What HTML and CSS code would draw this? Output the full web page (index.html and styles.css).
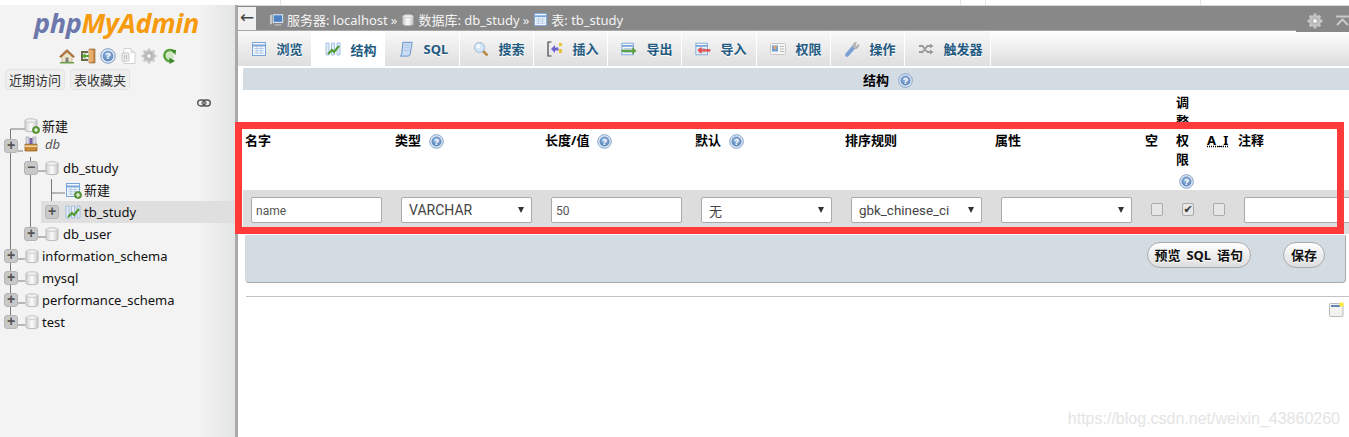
FILE: index.html
```html
<!DOCTYPE html>
<html lang="zh">
<head>
<meta charset="utf-8">
<title>phpMyAdmin</title>
<link rel="stylesheet" href="styles.css">
</head>
<body>
<svg class="defs" width="0" height="0">
  <defs>
    <radialGradient id="hg" cx="50%" cy="40%" r="60%"><stop offset="0" stop-color="#a9c3e6"/><stop offset="1" stop-color="#4f7fb8"/></radialGradient>
    <linearGradient id="dbg" x1="0" x2="1" y1="0" y2="0"><stop offset="0" stop-color="#d0d0d0"/><stop offset=".5" stop-color="#fbfbfb"/><stop offset="1" stop-color="#c8c8c8"/></linearGradient>
    <symbol id="i-help" viewBox="0 0 16 16"><circle cx="8" cy="8" r="7.3" fill="#dfe8f4" stroke="#7f9fc8"/><circle cx="8" cy="8" r="5.3" fill="url(#hg)"/><text x="8" y="11.4" font-size="9.5" font-weight="700" text-anchor="middle" fill="#fff" font-family="Liberation Sans">?</text></symbol>
    <symbol id="i-db" viewBox="0 0 14 16"><path d="M1 3.500C1 1.600 13 1.600 13 3.500V13C13 15.200 1 15.200 1 13Z" fill="url(#dbg)" stroke="#b9b9b9"/><ellipse cx="7" cy="3.600" rx="5.700" ry="1.800" fill="#efefef" stroke="#c0c0c0" stroke-width=".7"/></symbol>
    <symbol id="i-plus" viewBox="0 0 8 8"><circle cx="4" cy="4" r="3.6" fill="#5c9a3a" stroke="#3f7a24" stroke-width=".6"/><path d="M4 2v4M2 4h4" stroke="#fff" stroke-width="1.2"/></symbol>
    <symbol id="i-table" viewBox="0 0 16 16"><rect x="1.5" y="1.5" width="13" height="13" fill="#f4f8fd" stroke="#7aa5d8"/><path d="M1.5 4.5h13" stroke="#7aa5d8" stroke-width="2"/><path d="M3 7.5h10M3 9.7h10M3 12h10M6 6v7M10 6v7" stroke="#a9c4e4" stroke-width=".8"/></symbol>
    <symbol id="i-struct" viewBox="0 0 16 16"><path d="M1 2h3v12H1zM6.5 2h3v12h-3zM12 2h3v12h-3z" fill="#e4edf8" stroke="#90b2dc" stroke-width=".8"/><path d="M3 13 7 9l2 2 5-6" fill="none" stroke="#4d9a2e" stroke-width="2"/></symbol>
    <symbol id="i-scroll" viewBox="0 0 16 18"><path d="M4.5 1.5H15L12.5 15.5Q12 17 10 17H1.5Q3 16.5 3.2 14Z" fill="#c9dcf3" stroke="#5d8cc5"/><path d="M6 4.5h6M5.6 7.5h6M5.2 10.5h6" stroke="#9fbde2" stroke-width=".8"/></symbol>
    <symbol id="i-search" viewBox="0 0 16 16"><path d="m9.5 9.5 5 5" stroke="#b98a4a" stroke-width="2.6"/><circle cx="6.5" cy="6.5" r="5" fill="#d4e6f8" stroke="#9db7d3"/><circle cx="5.3" cy="5.3" r="2" fill="#fff" opacity=".8"/></symbol>
    <symbol id="i-insert" viewBox="0 0 16 16"><path d="M4.500 1H1v14h3.500" fill="none" stroke="#444" stroke-width="1.200"/><path d="M4 8l4-4v2.500h3.500v3H8V12Z" fill="#6f63c9"/><rect x="12" y="2" width="3" height="3" fill="#e8c33a"/><rect x="12" y="8" width="3" height="4" fill="#e8c33a"/></symbol>
    <symbol id="i-export" viewBox="0 0 18 16"><rect x="1" y="1.500" width="13" height="13" fill="#f4f8fd" stroke="#7aa5d8"/><path d="M1 4.500h13" stroke="#7aa5d8" stroke-width="2"/><path d="M3 7.500h9M3 12h9" stroke="#a9c4e4"/><path d="M1 9h12V6.500l4 3.500-4 3.500V11H1Z" fill="#5aa636" stroke="#3e7d22" stroke-width=".5"/></symbol>
    <symbol id="i-import" viewBox="0 0 18 16"><rect x="1" y="1.500" width="13" height="13" fill="#f4f8fd" stroke="#7aa5d8"/><path d="M1 4.500h13" stroke="#7aa5d8" stroke-width="2"/><path d="M3 7.500h9M3 12h9" stroke="#a9c4e4"/><path d="M17 8.500H7V6L3 9.500 7 13v-2.500h10Z" fill="#ef4f4f" stroke="#c93030" stroke-width=".5"/></symbol>
    <symbol id="i-card" viewBox="0 0 16 14"><rect x=".5" y="1.500" width="15" height="11" rx="1" fill="#f5f5f5" stroke="#c8c8c8"/><rect x="2" y="3.500" width="6" height="6" fill="#6f9ed6"/><circle cx="5" cy="5.500" r="1.700" fill="#e8a468"/><path d="M10 4.500h4M10 7h4M10 9.500h4" stroke="#bbb"/></symbol>
    <symbol id="i-wrench" viewBox="0 0 16 18"><path d="m2.500 15.500 7-8" stroke="#7ba0d4" stroke-width="4.500" stroke-linecap="round"/><path d="M9 6.500A4 4 0 0 1 13 1.500l-1.500 3 2 1.500 2-2.500A4 4 0 0 1 10.500 8.500" fill="#b9b9b9" stroke="#909090" stroke-width=".5"/></symbol>
    <symbol id="i-trig" viewBox="0 0 16 12"><path d="M1 3h3.500l5 6H12M1 9h3.500l5-6H12" fill="none" stroke="#9a9a9a" stroke-width="1.800"/><path d="m12 .5 3.500 2.500L12 5.500ZM12 6.500l3.500 2.500L12 11.500Z" fill="#9a9a9a"/></symbol>
    <symbol id="i-gear" viewBox="0 0 16 16"><circle cx="8" cy="8" r="6" fill="#c9c9c9"/><g stroke="#c9c9c9" stroke-width="2.600"><path d="M8 .5v15M.5 8h15M2.700 2.700l10.600 10.600M13.300 2.700 2.700 13.300"/></g><circle cx="8" cy="8" r="5" fill="#bdbdbd"/><circle cx="8" cy="8" r="2.600" fill="#efefef" stroke="#8e8e8e" stroke-width=".6"/></symbol>
  </defs>
</svg>

<div class="strip"><span class="tick t1"></span><span class="tick t2"></span><span class="tick t3"></span><span class="tick t4"></span></div>

<div class="app">
  <aside class="side">
    <div class="logo"><span class="php">php</span><span class="my">MyAdmin</span></div>
    <div class="quick">
      <svg class="qi" viewBox="0 0 16 16"><path d="M.5 8.500 8 1.500l7.500 7-1.500 1L8 4 2 9.500Z" fill="#b5773a" stroke="#7d4e20" stroke-width=".5"/><path d="M3 9l5-4.500L13 9v5H3Z" fill="#efe5c9" stroke="#a99a74" stroke-width=".5"/><rect x="6.500" y="9.500" width="3" height="4.500" fill="#7f7f7f"/><path d="M1 14h14v1.500H1Z" fill="#69a14a"/></svg>
      <svg class="qi" viewBox="0 0 16 16"><path d="M9 1h6v14H9Z" fill="#c98f4e" stroke="#8a5c28" stroke-width=".6"/><path d="M9 1 13 3v10l-4 2Z" fill="#e7b06a"/><path d="M1 3h7v2H3v6h5v2H1Z" fill="#6b6b4e"/><path d="M2 8l3.500-3v2H9v2H5.500v2Z" fill="#5aa636"/></svg>
      <svg class="qi" viewBox="0 0 16 16"><use href="#i-help"/></svg>
      <svg class="qi" viewBox="0 0 16 16"><path d="M3 .5h7l4 4v11H3Z" fill="#fff" stroke="#d2d2d2"/><path d="M10 .5v4h4" fill="#eee" stroke="#d2d2d2"/><rect x="1" y="5" width="7" height="8" rx="1" fill="#ececec" stroke="#c6c6c6"/><path d="M3.500 7v4M5.500 7v4" stroke="#bbb"/></svg>
      <svg class="qi" viewBox="0 0 16 16"><use href="#i-gear"/></svg>
      <svg class="qi" viewBox="0 0 16 16"><circle cx="8" cy="8" r="4" fill="#cfe6c2"/><path d="M12.500 4.500A5.500 5.500 0 1 0 8.500 13" fill="none" stroke="#58a23c" stroke-width="2.600"/><path d="M7.500 9.500l5.500 3.500-5.500 3ZM9 1.500l5 .5-.5 5Z" fill="#3f8a2a"/></svg>
    </div>
    <div class="side-tabs"><button class="side-btn">近期访问</button><button class="side-btn">表收藏夹</button></div>
    <div class="link-row"><svg class="link-i" viewBox="0 0 14 8"><rect x=".7" y="1" width="7.500" height="6" rx="3" fill="none" stroke="#555" stroke-width="1.400"/><rect x="5.800" y="1" width="7.500" height="6" rx="3" fill="none" stroke="#555" stroke-width="1.400"/><path d="M4 4h6" stroke="#888" stroke-width="1.400"/></svg></div>

    <div class="tree">
      <svg class="wires" width="236" height="222" viewBox="0 0 236 222"><path d="M10.500 22V216M10.500 22H25M18 152H25M18 174H25M18 196H25M18 218H25M30.500 50V130M38 64H46M38 130H46M51.500 72V108M51.500 86H65M59 108H65M18 44H23" fill="none" stroke="#7a7a7a"/></svg>
      <div class="row r-new"><svg class="dbi"><use href="#i-db"/></svg><svg class="badge"><use href="#i-plus"/></svg><span class="nm">新建</span></div>
      <div class="row r-db"><span class="exp">+</span><svg class="box" viewBox="0 0 16 16"><path d="M2 8h12v7H2Z" fill="#c98a3a" stroke="#8a5c22" stroke-width=".7"/><rect x="2" y="9.500" width="12" height="1.500" fill="#f0d8a0"/><rect x="3" y="1" width="3" height="7" fill="#d8d8e8" stroke="#777" stroke-width=".4"/><rect x="6.500" y="2" width="3" height="6" fill="#7a5fa8"/><rect x="10" y="1" width="3" height="7" fill="#d8d8e8" stroke="#777" stroke-width=".4"/></svg><span class="nm ital">db</span></div>
      <div class="row r-l1"><span class="exp">−</span><svg class="dbi gap7"><use href="#i-db"/></svg><span class="nm t-l1">db_study</span></div>
      <div class="row r-l2new"><svg class="ti"><use href="#i-table"/></svg><svg class="badge b2"><use href="#i-plus"/></svg><span class="nm">新建</span></div>
      <div class="row r-cur"><span class="exp">+</span><svg class="ti gap6"><use href="#i-struct"/></svg><span class="nm t-cur">tb_study</span></div>
      <div class="row r-l1"><span class="exp">+</span><svg class="dbi gap7"><use href="#i-db"/></svg><span class="nm t-l1">db_user</span></div>
      <div class="row r-l0"><span class="exp">+</span><svg class="dbi gap7"><use href="#i-db"/></svg><span class="nm t-l0">information_schema</span></div>
      <div class="row r-l0"><span class="exp">+</span><svg class="dbi gap7"><use href="#i-db"/></svg><span class="nm t-l0">mysql</span></div>
      <div class="row r-l0"><span class="exp">+</span><svg class="dbi gap7"><use href="#i-db"/></svg><span class="nm t-l0">performance_schema</span></div>
      <div class="row r-l0"><span class="exp">+</span><svg class="dbi gap7"><use href="#i-db"/></svg><span class="nm t-l0">test</span></div>
    </div>
  </aside>
  <div class="divider"></div>

  <main class="main">
    <div class="topbar">
      <div class="back">←</div>
      <div class="crumbs">
        <svg class="ci" viewBox="0 0 16 16"><rect x="1" y="3" width="3" height="10" fill="#c9c9c9"/><rect x="3.500" y="2" width="12" height="10" fill="#dbe6f3" stroke="#777" stroke-width=".6"/><rect x="5" y="3.500" width="9" height="7" fill="#4f82c4"/><rect x="6" y="13" width="7" height="1.500" fill="#bbb"/></svg><span class="cr">服务器: localhost</span><span class="sep">»</span>
        <svg class="ci2" viewBox="0 0 14 16"><use href="#i-db"/></svg><span class="cr">数据库: db_study</span><span class="sep">»</span>
        <svg class="ci ci3" viewBox="0 0 16 16"><use href="#i-table"/></svg><span class="cr">表: tb_study</span>
      </div>
    </div>
    <div class="top-tools">
      <svg class="tool-gear"><use href="#i-gear"/></svg>
      <svg class="tool-up" viewBox="0 0 13 12"><path d="M0 1.500h13" stroke="#c9c9c9" stroke-width="2"/><path d="m1 10 5.500-5.500L12 10" fill="none" stroke="#c9c9c9" stroke-width="2"/></svg>
    </div>

    <nav class="tabs">
      <a class="tab"><svg class="tab-i"><use href="#i-table"/></svg>浏览</a>
      <a class="tab t-b active"><svg class="tab-i"><use href="#i-struct"/></svg>结构</a>
      <a class="tab t-c"><svg class="tab-i"><use href="#i-scroll"/></svg>SQL</a>
      <a class="tab"><svg class="tab-i"><use href="#i-search"/></svg>搜索</a>
      <a class="tab"><svg class="tab-i"><use href="#i-insert"/></svg>插入</a>
      <a class="tab"><svg class="tab-i"><use href="#i-export"/></svg>导出</a>
      <a class="tab t-d"><svg class="tab-i"><use href="#i-import"/></svg>导入</a>
      <a class="tab"><svg class="tab-i"><use href="#i-card"/></svg>权限</a>
      <a class="tab"><svg class="tab-i"><use href="#i-wrench"/></svg>操作</a>
      <a class="tab t-e"><svg class="tab-i"><use href="#i-trig"/></svg>触发器</a>
    </nav>

    <div class="content">
      <div class="heading"><b>结构</b><svg class="help h-head"><use href="#i-help"/></svg></div>

      <div class="grid g-head">
        <div class="th">名字</div>
        <div class="th">类型<svg class="help"><use href="#i-help"/></svg></div>
        <div class="th">长度/值<svg class="help"><use href="#i-help"/></svg></div>
        <div class="th">默认<svg class="help"><use href="#i-help"/></svg></div>
        <div class="th">排序规则</div>
        <div class="th">属性</div>
        <div class="th th-c">空</div>
        <div class="th th-v"><span>调整权限</span><svg class="help"><use href="#i-help"/></svg></div>
        <div class="th th-c"><abbr class="ai">A_I</abbr></div>
        <div class="th">注释</div>
      </div>

      <div class="grid g-row">
        <div class="td"><input class="fld" value="name" readonly></div>
        <div class="td"><div class="sel">VARCHAR</div></div>
        <div class="td"><input class="fld" value="50" readonly></div>
        <div class="td"><div class="sel sel-cjk">无</div></div>
        <div class="td"><div class="sel sel-sm">gbk_chinese_ci</div></div>
        <div class="td"><div class="sel"></div></div>
        <div class="td td-c"><span class="cb"></span></div>
        <div class="td td-c"><span class="cb on">✔</span></div>
        <div class="td td-c"><span class="cb"></span></div>
        <div class="td"><input class="fld wide" readonly></div>
      </div>

      <div class="panel">
        <button class="btn">预览 SQL 语句</button>
        <button class="btn">保存</button>
      </div>
      <hr class="rule">
      <div class="console-row">
        <svg class="console" viewBox="0 0 15 15"><rect x=".5" y="1.500" width="13.500" height="13" rx="1" fill="#f2f2ee" stroke="#bbb"/><path d="M2 4h9" stroke="#2f5f9f" stroke-width="1.500"/><circle cx="12.500" cy="2.500" r="2.300" fill="#ffe93b"/></svg>
      </div>
    </div>
  </main>
</div>

<div class="redbox"></div>
<div class="watermark">https://blog.csdn.net/weixin_43860260</div>
</body>
</html>
```
FILE: styles.css
```css
* { box-sizing: border-box; }
html, body { margin: 0; height: 437px; overflow: hidden; background: #fff; }
body { font: 13px "Noto Sans", "Noto Sans CJK SC", sans-serif; color: #000; position: relative; }
.defs { position: absolute; }
svg { display: block; flex: none; }

.strip { height: 5px; display: flex; }
.tick { width: 1px; background: #e4e4e4; }
.t1 { margin-left: 280px; }
.t2 { margin-left: 679px; }
.t3 { margin-left: 24px; }
.t4 { margin-left: 214px; }

.app { display: flex; height: 432px; }
.side { width: 235px; flex: none; position: relative; background: linear-gradient(90deg, #f3f3f3 0, #f3f3f3 85%, #e3e4e4 100%); }
.divider { width: 3px; flex: none; background: #a9a9a9; }
.main { flex: 1; min-width: 0; border-top: 1px solid #d8d8d8; position: relative; overflow: hidden; }

.logo { font: italic 700 27px/30px "Open Sans", sans-serif; letter-spacing: -.3px; padding: 3px 0 0 34px; height: 43px; white-space: nowrap; }
.php { color: #6c78ac; }
.my { color: #f79a0d; }
.quick { display: flex; height: 17px; padding-left: 59px; align-items: center; margin-top: -1px; margin-bottom: 1px; }
.qi { width: 16px; height: 16px; margin-right: 4.500px; }
.side-tabs { display: flex; gap: 5px; padding: 4px 0 0 5px; }
.side-btn { height: 21px; padding: 0 3px; width: 60px; font: 13px/19px "Noto Sans CJK SC", sans-serif; color: #333; background: #eee; border: 1px solid #e3e3e3; border-radius: 4px; white-space: nowrap; }
.link-row { display: flex; justify-content: flex-end; padding: 9px 24px 0 0; height: 21px; }
.link-i { width: 14px; height: 8px; }

.tree { position: relative; padding-top: 4px; }
.wires { position: absolute; left: 0; top: -4px; }
.row { display: flex; align-items: center; height: 22px; position: relative; }
.nm { color: #111; white-space: nowrap; font-size: 13px; }
.exp { width: 14px; height: 14px; flex: none; border-radius: 3px; background: #c9c9c9; border: 1px solid #b5b5b5; color: #555; font: 700 14px/11px "Liberation Sans", sans-serif; text-align: center; }
.dbi { width: 14px; height: 16px; }
.ti { width: 16px; height: 16px; }
.badge { width: 8px; height: 8px; margin: 10px 0 0 -6px; }
.gap7 { margin-left: 7px; }
.gap6 { margin-left: 6px; }
.r-new { height: 20px; padding-left: 24px; }
.r-new .nm { margin-left: 2px; }
.r-db { height: 22px; padding-left: 4px; }
.box { width: 16px; height: 16px; margin-left: 5px; margin-top: -5px; }
.ital { font-style: italic; color: #555; margin: -4px 0 0 6px; }
.r-l1 { padding-left: 24px; }
.t-l1 { margin-left: 4px; }
.r-l2new { padding-left: 65px; }
.r-l2new .nm { margin: -2px 0 0 2px; }
.b2 { margin-left: -7px; }
.r-cur { margin-left: 41px; padding-left: 4px; background: #dfdfdf; }
.t-cur { margin-left: 3px; }
.r-l0 { padding-left: 4px; }
.t-l0 { margin-left: 3px; }

.topbar { height: 24px; background: #888; display: flex; align-items: center; }
.back { width: 18px; height: 23px; margin-top: 1px; background: #f0f0f0; color: #444; font: 17px/20px "DejaVu Sans", sans-serif; text-align: center; }
.crumbs { display: flex; align-items: center; padding-left: 13px; color: #fff; font-size: 13px; margin-top: 3px; }
.ci { width: 15px; height: 15px; margin-right: 3px; }
.ci2 { width: 12px; height: 14px; margin-right: 4px; margin-left: 5px; }
.ci3 { margin-left: 4px; margin-right: 3px; }
.cr { white-space: nowrap; color: #f4f4f4; }
.sep { margin-left: 3px; font-size: 13px; color: #eee; }
.top-tools { position: absolute; right: 0; top: 0; width: 53px; height: 26px; background: #888; display: flex; align-items: center; padding: 3px 0 0 12px; }
.tool-gear { width: 16px; height: 16px; margin-left: -1px; }
.tool-up { width: 13px; height: 12px; margin-left: 13px; }

.tabs { display: flex; height: 37px; border-top: 1px solid #a8a8a8; background: linear-gradient(#fff, #dcdcdc); border-bottom: 1px solid #fff; }
.tab { display: flex; align-items: center; height: 35px; padding-left: 13px; width: 74px; flex: none; font-weight: 700; font-size: 13px; color: #235a81; text-shadow: 0 1px 0 #fff; border-right: 1px solid #fff; background: linear-gradient(#f9f9f9, #dedede); white-space: nowrap; }
.tab-i { width: 16px; height: 16px; margin-right: 9.500px; }
.t-d { width: 75px; }
.t-e { width: 86px; }
.t-b { width: 73px; }
.active { background: #fff; height: 36px; }
.t-c { width: 75px; }

.heading { margin: 1px 0 0 5px; height: 22px; background: #d3dce3; display: flex; align-items: center; padding-left: 620px; font-size: 13px; }
.help { width: 15px; height: 15px; margin-left: 8px; display: inline-block; vertical-align: -4px; }
.h-head { margin: 2px 0 0 9px; }

.grid { display: grid; grid-template-columns: repeat(6, 150px) 31px 31px 31px 200px; margin-left: 5px; }
.g-head { height: 99px; margin-top: 1px; padding-left: 2px; width: 1200px; }
.th { font-weight: 700; font-size: 13px; line-height: 19px; align-self: center; white-space: nowrap; }
.th-c { text-align: left; }
.th-v { white-space: normal; width: 15px; line-height: 19px; }
.th-v span { display: block; width: 14px; margin-top: 0; }
.th-v .help { margin: 5px 0 0 3px; display: block; }
.ai { text-decoration: underline dotted; letter-spacing: 1px; }

.g-row { background: #ddd; height: 44px; padding: 7px 0 0 2px; width: 1200px; }
.td { padding-left: 6px; }
.td-c { padding-top: 6px; }
.fld { width: 131px; height: 26px; border: 1px solid #aaa; border-radius: 2px; background: #fff; padding: 1px 4px 0; font: 12px "Roboto", sans-serif; color: #555; outline: 0; display: block; }
.wide { width: 196px; }
.sel { position: relative; width: 131px; height: 26px; border: 1px solid #aaa; border-radius: 2px; background: #fff; padding-left: 7px; font: 14px/25px "Roboto", sans-serif; color: #444; }
.sel::after { content: ""; position: absolute; right: 7px; top: 9px; border: 3.500px solid transparent; border-top: 6px solid #333; border-bottom: 0; }
.sel-cjk { font: 13px/26px "Noto Sans CJK SC", sans-serif; }
.sel-sm { font-size: 13.400px; }
.cb { display: block; width: 12px; height: 13px; border: 1px solid #aaa; border-radius: 2px; background: #e6e6e6; font: 11px/11px "DejaVu Sans", sans-serif; text-align: center; color: #333; }

.panel { margin: 1px 0 0 7px; width: 1101px; height: 48px; background: #d3dce3; border: 1px solid #d3dce3; border-bottom: 1px solid #aaa; border-right: 1px solid #aaa; border-radius: 0 0 4px 4px; display: flex; justify-content: flex-end; align-items: flex-start; gap: 32px; padding: 6px 20px 0 0; }
.btn { height: 26px; padding: 0 7px; border: 1px solid #aaa; border-radius: 13px; background: linear-gradient(#fff, #ddd); font: 700 13px/24px "Noto Sans", "Noto Sans CJK SC", sans-serif; color: #111; text-shadow: 0 1px 0 #fff; white-space: nowrap; word-spacing: 2.500px; }
.rule { margin: 13px 0 0 8px; border: 0; border-top: 1px solid #c3c3c3; height: 0; }
.console-row { display: flex; justify-content: flex-end; padding: 5px 5px 0 0; }
.console { width: 15px; height: 15px; }

.redbox { position: absolute; left: 235px; top: 122px; width: 1109px; height: 112px; border: 7px solid #ff3a3a; pointer-events: none; }
.watermark { position: absolute; right: 9px; top: 410px; font: 16px/18px "Liberation Sans", sans-serif; color: #e4e4e4; white-space: nowrap; }
```
